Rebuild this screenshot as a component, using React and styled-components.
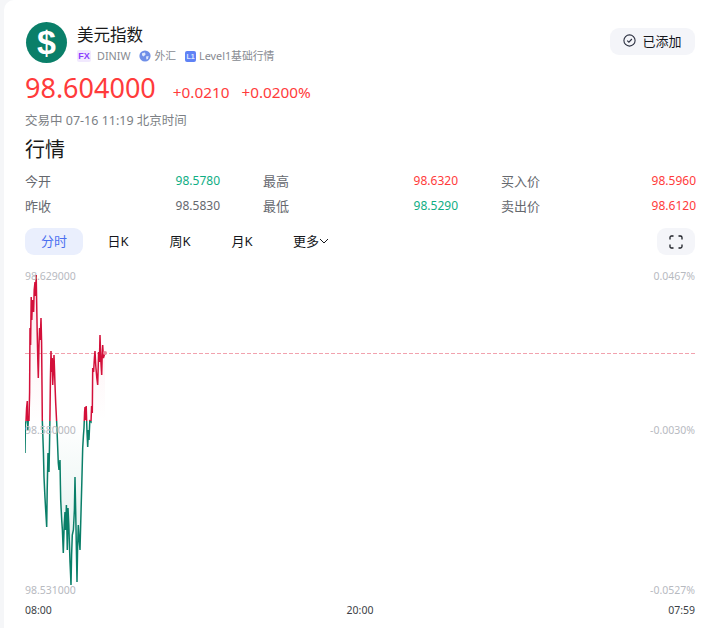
import React from "react";
import styled, { createGlobalStyle } from "styled-components";

const GlobalStyle = createGlobalStyle`
  html, body {
    margin: 0;
    padding: 0;
    background: #f5f6f8;
    font-family: "Noto Sans", "Noto Sans CJK SC", sans-serif;
  }
`;

const SPLIT_Y = 421;
const LEFT = 25;
const RIGHT = 695;
const TOP = 265;

// traced from the reference, page coordinates
const POINTS = [
  [25, 453], [25.4, 425], [26, 421], [26.6, 408], [27.3, 401], [27.8, 430], [28.4, 418], [29, 421],
  [29.6, 392], [30, 328], [30.6, 345], [31.2, 297], [31.8, 320], [32.4, 300], [33, 308], [33.6, 312],
  [34.2, 290], [35, 282], [35.6, 296], [36.2, 275], [36.8, 310], [37.2, 332], [37.8, 360], [38.3, 378],
  [39, 345], [39.6, 328], [40.2, 340], [41, 318], [41.6, 342], [42, 385], [42.3, 420], [43.4, 452],
  [44, 477], [44.6, 490], [45, 498], [45.8, 512], [46.7, 527], [47.2, 490], [48, 453], [48.6, 460],
  [49, 472], [49.6, 440], [50, 413], [50.4, 380], [51, 351], [51.6, 372], [52.2, 358], [52.7, 385],
  [53.4, 370], [54, 355], [54.6, 372], [55, 385], [55.7, 403], [56.8, 425], [58.3, 463], [59, 470],
  [60, 460], [60.4, 485], [60.7, 500], [61.7, 520], [62.4, 530], [63.3, 553], [64.2, 525], [65, 512],
  [65.6, 530], [66.4, 505], [67.3, 550], [68, 508], [68.8, 525], [70, 562], [70.6, 575], [71, 585],
  [71.6, 555], [72.3, 535], [73.4, 530], [74.4, 510], [75, 477], [75.7, 512], [76.4, 550], [77, 582],
  [77.6, 548], [78.3, 525], [79.2, 540], [80, 550], [80.8, 520], [81.7, 487], [82.7, 448], [83.4, 436],
  [84, 428], [84.6, 412], [85, 407], [85.6, 420], [86.2, 406], [87, 432], [87.7, 447], [88.4, 430],
  [89, 440], [89.8, 421], [91, 422], [91.6, 406], [92.3, 413], [92.7, 368], [93.6, 372], [94.4, 358],
  [95, 351], [95.8, 366], [96.8, 378], [97.7, 385], [98.6, 352], [99.4, 362], [100, 335], [100.8, 360],
  [101.7, 375], [102.2, 355], [102.7, 345], [103.4, 358], [104.3, 355], [105, 353],
];

const toLine = (points) => points.map(([x, y]) => `${x - LEFT},${y - TOP}`).join(" ");

const toArea = (points) =>
  `${points[0][0] - LEFT},${SPLIT_Y - TOP} ${toLine(points)} ${points[points.length - 1][0] - LEFT},${SPLIT_Y - TOP}`;

const Page = styled.div`
  width: 704px;
  height: 628px;
  margin-left: 4px;
  padding: 22px 13px 0 21px;
  box-sizing: border-box;
  background: #fff;
  border-top-left-radius: 10px;
  overflow: hidden;
`;

const Header = styled.div`
  display: flex;
  justify-content: space-between;
  align-items: flex-start;
`;

const Identity = styled.div`
  display: flex;
  gap: 10px;
`;

const Logo = styled.div`
  width: 41px;
  height: 41px;
  margin-left: 1px;
  border-radius: 50%;
  background: #0a7f69;
  color: #fff;
  font: bold 34px/41px "Liberation Sans", sans-serif;
  text-align: center;
`;

const Names = styled.div`
  display: flex;
  flex-direction: column;
`;

const Name = styled.div`
  margin-top: 1px;
  font-size: 16.5px;
  line-height: 24px;
  color: #1a1a1a;
`;

const Tags = styled.div`
  display: flex;
  align-items: center;
  gap: 9px;
  margin-top: 0;
  font-size: 10.8px;
  line-height: 18px;
  color: #878a91;
`;

const Tag = styled.span`
  display: flex;
  align-items: center;
  gap: ${({ $gap }) => $gap || 3}px;
`;

const FxBadge = styled.span`
  width: 14px;
  height: 12px;
  border-radius: 2px;
  background: #f1e9fe;
  color: #8b3dff;
  font: bold 9px/12px "Liberation Sans", sans-serif;
  text-align: center;
`;

const LevelBadge = styled.span`
  width: 11px;
  height: 11px;
  border-radius: 2px;
  background: #5f82f5;
  color: #dfe7ff;
  font: bold 7px/11px "Liberation Sans", sans-serif;
  text-align: center;
`;

const AddedButton = styled.button`
  display: flex;
  align-items: center;
  justify-content: center;
  gap: 6px;
  width: 85px;
  height: 27px;
  margin-top: 6px;
  padding: 0 0 2px;
  border: 0;
  border-radius: 9px;
  background: #f4f5f9;
  color: #15171c;
  font: inherit;
  font-size: 13px;
`;

const Quote = styled.div`
  display: flex;
  align-items: baseline;
  margin-top: 4px;
  color: #ff3b3b;
`;

const Price = styled.span`
  font-size: 27px;
  line-height: 38px;
  margin-right: 17px;
`;

const Change = styled.span`
  font-size: 15.3px;
  margin-right: 12px;
`;

const Status = styled.div`
  margin-top: 5px;
  font-size: 12.5px;
  line-height: 18px;
  color: #7c7f85;
`;

const Title = styled.h2`
  margin: 5px 0 0;
  font-size: 20px;
  font-weight: 400;
  line-height: 30px;
  color: #1a1a1a;
`;

const Stats = styled.div`
  display: grid;
  grid-template-columns: repeat(3, 195px);
  column-gap: 43px;
  row-gap: 7px;
  margin-top: 7px;
`;

const Stat = styled.div`
  display: flex;
  justify-content: space-between;
  font-size: 13px;
  line-height: 18px;
  color: #65686e;
`;

const StatValue = styled.span`
  font-size: 12px;
  color: ${({ $tone }) => ($tone === "up" ? "#ff3b3b" : $tone === "down" ? "#0fae84" : "#65686e")};
`;

const Toolbar = styled.div`
  display: flex;
  justify-content: space-between;
  margin-top: 13px;
`;

const Tabs = styled.div`
  display: flex;
  gap: 4px;
`;

const TabButton = styled.button`
  display: flex;
  align-items: center;
  justify-content: center;
  width: ${({ $wide }) => ($wide ? 72 : 58)}px;
  height: 27px;
  margin-right: ${({ $active }) => ($active ? 2 : 0)}px;
  padding: 0 0 2px;
  border: 0;
  border-radius: 9px;
  background: ${({ $active }) => ($active ? "#eaeffd" : "transparent")};
  color: ${({ $active }) => ($active ? "#4a6ff0" : "#15171c")};
  font: inherit;
  font-size: 13px;
`;

const IconButton = styled.button`
  display: flex;
  align-items: center;
  justify-content: center;
  width: 38px;
  height: 27px;
  padding: 0;
  border: 0;
  border-radius: 9px;
  background: #f4f5f9;
`;

const Chart = styled.div`
  position: relative;
  width: 670px;
  height: 335px;
  margin-top: 10px;
`;

const ChartSvg = styled.svg`
  display: block;
`;

const AxisLabel = styled.span`
  position: absolute;
  top: ${({ $top }) => $top}px;
  ${({ $right }) => ($right ? "right: 0;" : "left: 0;")}
  font-size: 10.5px;
  line-height: 16px;
  color: #b7babf;
`;

const TimeAxis = styled.div`
  display: flex;
  justify-content: space-between;
  margin-top: 2px;
  font-size: 10.5px;
  line-height: 16px;
  color: #3c3f46;
`;

const CheckIcon = () => (
  <svg width="13" height="13" viewBox="0 0 13 13" fill="none" stroke="#2b3040" strokeWidth="1.1">
    <circle cx="6.5" cy="6.5" r="5.6" />
    <path d="M4.2 6.6 L5.9 8.2 L8.9 5" />
  </svg>
);

const GlobeIcon = () => (
  <svg width="12" height="12" viewBox="0 0 12 12">
    <circle cx="6" cy="6" r="5.6" fill="#6f8fe8" />
    <path d="M3 3.2 L6 2.6 L6.6 4.6 L4.6 6.4 L3 5.2 Z M7 6.6 L9.6 6 L9 9 L7.4 9.6 Z" fill="#dfe7fb" />
  </svg>
);

const ChevronIcon = () => (
  <svg width="10" height="10" viewBox="0 0 10 10" fill="none" stroke="#15171c" strokeWidth="1">
    <path d="M1 3 L5 7 L9 3" />
  </svg>
);

const FullscreenIcon = () => (
  <svg width="14" height="14" viewBox="0 0 14 14" fill="none" stroke="#1c1f26" strokeWidth="1.3">
    <path d="M1 4.5 V2.5 Q1 1 2.5 1 H4.5 M9.5 1 H11.5 Q13 1 13 2.5 V4.5 M13 9.5 V11.5 Q13 13 11.5 13 H9.5 M4.5 13 H2.5 Q1 13 1 11.5 V9.5" />
  </svg>
);

const stats = [
  ["今开", "98.5780", "down"],
  ["最高", "98.6320", "up"],
  ["买入价", "98.5960", "up"],
  ["昨收", "98.5830"],
  ["最低", "98.5290", "down"],
  ["卖出价", "98.6120", "up"],
];

const PriceChart = () => {
  const splitAt = SPLIT_Y - TOP;
  return (
    <Chart>
      <ChartSvg width={RIGHT - LEFT} height="335" viewBox={`0 0 ${RIGHT - LEFT} 335`}>
        <defs>
          <linearGradient id="upFill" gradientUnits="userSpaceOnUse" x1="0" y1="10" x2="0" y2={splitAt}>
            <stop offset="0" stopColor="#e0103a" stopOpacity="0.09" />
            <stop offset="1" stopColor="#e0103a" stopOpacity="0" />
          </linearGradient>
          <linearGradient id="downFill" gradientUnits="userSpaceOnUse" x1="0" y1={splitAt} x2="0" y2="320">
            <stop offset="0" stopColor="#0a7f69" stopOpacity="0" />
            <stop offset="1" stopColor="#0a7f69" stopOpacity="0.14" />
          </linearGradient>
          <clipPath id="upClip">
            <rect x="0" y="0" width="670" height={splitAt} />
          </clipPath>
          <clipPath id="downClip">
            <rect x="0" y={splitAt} width="670" height={335 - splitAt} />
          </clipPath>
        </defs>
        <polygon points={toArea(POINTS)} fill="url(#upFill)" clipPath="url(#upClip)" />
        <polygon points={toArea(POINTS)} fill="url(#downFill)" clipPath="url(#downClip)" />
        <line x1="0" x2="670" y1="88.5" y2="88.5" stroke="#f2a2ae" strokeDasharray="4 2" />
        <polyline points={toLine(POINTS)} fill="none" stroke="#d3103a" strokeWidth="1.5" clipPath="url(#upClip)" />
        <polyline points={toLine(POINTS)} fill="none" stroke="#0a7f69" strokeWidth="1.5" clipPath="url(#downClip)" />
        <circle cx="80" cy="88" r="2" fill="#ee8a9c" />
      </ChartSvg>
      <AxisLabel $top={3}>98.629000</AxisLabel>
      <AxisLabel $top={157}>98.580000</AxisLabel>
      <AxisLabel $top={317}>98.531000</AxisLabel>
      <AxisLabel $right $top={3}>0.0467%</AxisLabel>
      <AxisLabel $right $top={157}>-0.0030%</AxisLabel>
      <AxisLabel $right $top={317}>-0.0527%</AxisLabel>
    </Chart>
  );
};

export default function App() {
  return (
    <Page>
      <GlobalStyle />
      <Header>
        <Identity>
          <Logo>$</Logo>
          <Names>
            <Name>美元指数</Name>
            <Tags>
              <Tag $gap={6}>
                <FxBadge>FX</FxBadge>
                DINIW
              </Tag>
              <Tag>
                <GlobeIcon />
                外汇
              </Tag>
              <Tag>
                <LevelBadge>L1</LevelBadge>
                Level1基础行情
              </Tag>
            </Tags>
          </Names>
        </Identity>
        <AddedButton>
          <CheckIcon />
          已添加
        </AddedButton>
      </Header>
      <Quote>
        <Price>98.604000</Price>
        <Change>+0.0210</Change>
        <Change>+0.0200%</Change>
      </Quote>
      <Status>交易中 07-16 11:19 北京时间</Status>
      <Title>行情</Title>
      <Stats>
        {stats.map(([label, value, tone]) => (
          <Stat key={label}>
            {label}
            <StatValue $tone={tone}>{value}</StatValue>
          </Stat>
        ))}
      </Stats>
      <Toolbar>
        <Tabs>
          <TabButton $active>分时</TabButton>
          <TabButton>日K</TabButton>
          <TabButton>周K</TabButton>
          <TabButton>月K</TabButton>
          <TabButton $wide>
            更多
            <ChevronIcon />
          </TabButton>
        </Tabs>
        <IconButton>
          <FullscreenIcon />
        </IconButton>
      </Toolbar>
      <PriceChart />
      <TimeAxis>
        <span>08:00</span>
        <span>20:00</span>
        <span>07:59</span>
      </TimeAxis>
    </Page>
  );
}
